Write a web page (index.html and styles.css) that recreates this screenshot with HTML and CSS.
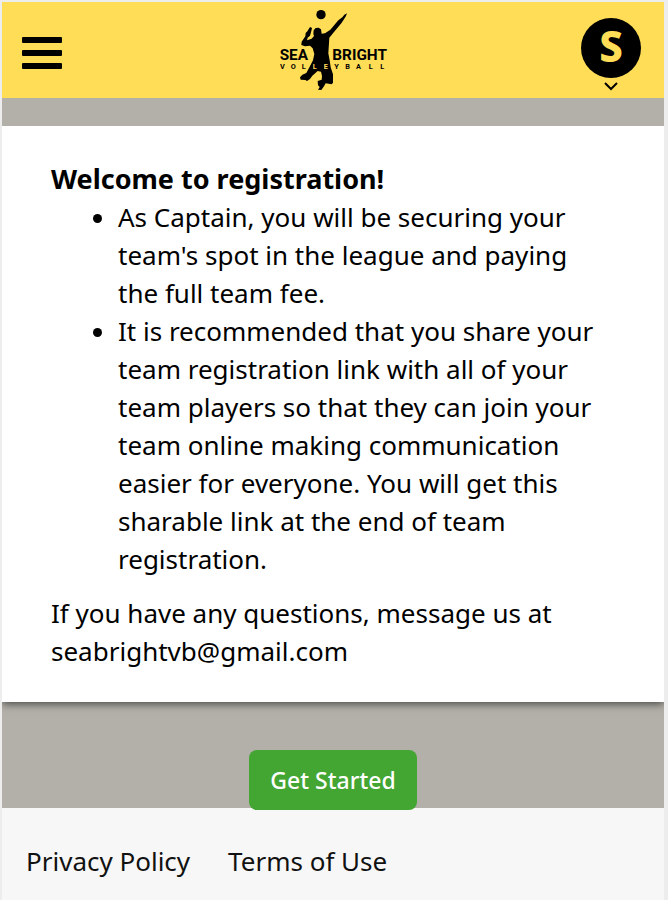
FILE: index.html
```html
<!DOCTYPE html>
<html lang="en">
   <head>
      <meta charset="UTF-8" />
      <meta name="viewport" content="width=device-width, initial-scale=1.0"/>
      <title>Sea Bright Volleyball - Registration</title>
      <link rel="stylesheet" href="styles.css">
   </head>
   <body>
      <header class="header">
         <button class="menu-button" type="button" aria-label="Menu">
            <span class="menu-bar"></span>
            <span class="menu-bar"></span>
            <span class="menu-bar"></span>
         </button>
         <a class="logo" href="#" aria-label="Sea Bright Volleyball">
            <svg width="110" height="82" viewBox="24 30 330 246">
               <circle cx="153" cy="47" r="14"/>
               <path d="M231 43 L223 47 L217 55 L205 64 L181 92 L165 103 L155 104 L153 91 L146 86 L137 87 L131 94 L130 104 L132 111 L125 119 L111 124 L113 116 L120 110 L124 96 L126 87 L120 84 L112 97 L107 102 L106 112 L95 128 L94 138 L105 142 L120 140 L128 148 L133 165 L129 184 L117 207 L109 222 L97 227 L90 235 L92 242 L106 243 L111 246 L120 240 L127 230 L143 216 L153 218 L156 231 L155 242 L143 246 L144 259 L149 264 L144 272 L154 273 L162 262 L167 253 L185 256 L189 251 L189 226 L182 205 L179 184 L175 163 L177 133 L178 116 L192 99 L214 73 L221 62 L228 51 Z"/>
               <text class="logo-name" x="29" y="183">SEA</text>
               <text class="logo-name" x="187" y="183">BRIGHT</text>
               <text class="logo-sub" x="30 62 95" y="211">VOL</text>
               <text class="logo-sub logo-sub-light" x="128 161" y="211">LE</text>
               <text class="logo-sub" x="193 226 258 296 331" y="211">YBALL</text>
            </svg>
         </a>
         <button class="account-button" type="button" aria-label="Account">
            <span class="avatar">S</span>
            <svg width="16" height="10" viewBox="0 0 16 10">
               <path d="M2 2 L8 8 L14 2" fill="none" stroke="#000" stroke-width="2"/>
            </svg>
         </button>
      </header>
      <main class="main">
         <div class="card">
            <h1 class="title">Welcome to registration!</h1>
            <ul class="info-list">
               <li>As Captain, you will be securing your team's spot in the league and paying the full team fee.</li>
               <li>It is recommended that you share your team registration link with all of your team players so that they can join your team online making communication easier for everyone. You will get this sharable link at the end of team registration.</li>
            </ul>
            <p class="contact">If you have any questions, message us at seabrightvb@gmail.com</p>
         </div>
         <div class="button-container">
            <button class="start-button" type="button">Get Started</button>
         </div>
      </main>
      <footer class="footer">
         <a href="#">Privacy Policy</a>
         <a href="#">Terms of Use</a>
      </footer>
   </body>
</html>
```
FILE: styles.css
```css
* {
box-sizing: border-box;
}
body {
background-color: #f7f7f7;
color: #111;
font-family: "Noto Sans", sans-serif;
font-size: 26px;
line-height: 38px;
margin: 0;
min-height: 100vh;
border: solid #ededee;
border-width: 2px 4px 0 2px;
}
button {
font-family: inherit;
border: none;
cursor: pointer;
}
.header {
background-color: #ffdd57;
height: 96px;
padding: 0 20px;
display: grid;
grid-template-columns: 1fr auto 1fr;
align-items: center;
}
.menu-button {
background: none;
padding: 0;
width: 40px;
display: flex;
flex-direction: column;
gap: 7px;
margin-top: 6px;
}
.menu-bar {
background-color: #000;
border-radius: 1px;
width: 100%;
height: 6px;
}
.logo {
display: flex;
}
.logo-name {
font-family: Roboto, sans-serif;
font-size: 46px;
font-weight: bold;
}
.logo-sub {
font-family: Roboto, sans-serif;
font-size: 22px;
font-weight: bold;
}
.logo-sub-light {
fill: #ffdd57;
}
.account-button {
background: none;
color: #000;
padding: 0;
justify-self: end;
display: flex;
flex-direction: column;
align-items: center;
gap: 3px;
margin: 8px 3px 0 0;
}
.avatar {
background-color: #000;
color: #ffdd57;
border-radius: 50%;
width: 60px;
height: 60px;
font-size: 42px;
font-weight: 800;
line-height: 56px;
}
.main {
background-color: #b3b0a9;
padding-top: 28px;
}
.card {
background-color: #fff;
color: #000;
padding: 34px 48px 32px;
box-shadow: 0 2px 8px rgba(0, 0, 0, 0.6);
clip-path: inset(0 0 -16px 0);
}
.title {
font-size: 27px;
font-weight: bold;
margin: 0;
padding-left: 1px;
}
.info-list {
margin: 0 0 16px;
padding: 0 8px 0 68px;
}
.contact {
margin: 0;
padding-left: 1px;
}
.button-container {
display: flex;
justify-content: center;
padding-top: 48px;
}
.start-button {
background-color: #43a532;
color: #fff;
border-radius: 8px;
font-size: 23px;
font-weight: 500;
line-height: 36px;
padding: 12px 21px;
margin-bottom: -2px;
}
.footer {
padding: 34px 24px 18px;
display: flex;
flex-wrap: wrap;
gap: 0 38px;
}
.footer a {
color: #111;
text-decoration: none;
}
```
